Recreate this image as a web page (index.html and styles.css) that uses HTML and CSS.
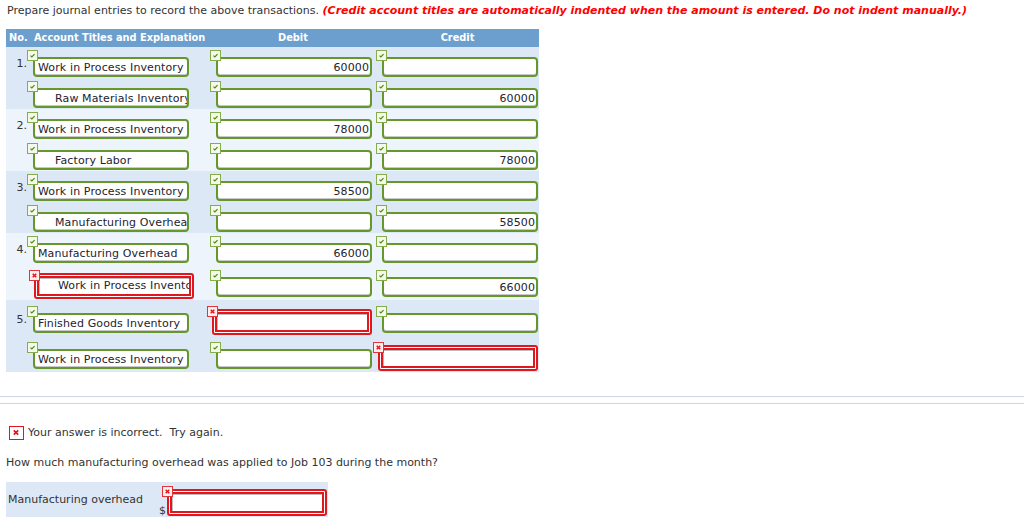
FILE: index.html
```html
<!DOCTYPE html>
<html>
<head>
<meta charset="utf-8">
<title>Journal entries</title>
<link rel="stylesheet" href="styles.css">
</head>
<body>
<p class="instr">Prepare journal entries to record the above transactions. <em class="note">(Credit account titles are automatically indented when the amount is entered. Do not indent manually.)</em></p>

<div class="jt">
  <div class="jt-head"><span class="h-no">No.</span><span>Account Titles and Explanation</span><span class="h-col">Debit</span><span class="h-col">Credit</span></div>

  <div class="entry dark">
    <div class="line">
      <div class="no">1.</div>
      <div class="field"><span class="chk"><svg viewBox="0 0 11 11"><path d="M3 5.6 L4.7 7.2 L8 3.8" /></svg></span><div class="inp">Work in Process Inventory</div></div>
      <div class="field"><span class="chk"><svg viewBox="0 0 11 11"><path d="M3 5.6 L4.7 7.2 L8 3.8" /></svg></span><div class="inp num">60000</div></div>
      <div class="field"><span class="chk"><svg viewBox="0 0 11 11"><path d="M3 5.6 L4.7 7.2 L8 3.8" /></svg></span><div class="inp num"></div></div>
    </div>
    <div class="line">
      <div class="no"></div>
      <div class="field"><span class="chk"><svg viewBox="0 0 11 11"><path d="M3 5.6 L4.7 7.2 L8 3.8" /></svg></span><div class="inp ind">Raw Materials Inventory</div></div>
      <div class="field"><span class="chk"><svg viewBox="0 0 11 11"><path d="M3 5.6 L4.7 7.2 L8 3.8" /></svg></span><div class="inp num"></div></div>
      <div class="field"><span class="chk"><svg viewBox="0 0 11 11"><path d="M3 5.6 L4.7 7.2 L8 3.8" /></svg></span><div class="inp num">60000</div></div>
    </div>
  </div>

  <div class="entry light">
    <div class="line">
      <div class="no">2.</div>
      <div class="field"><span class="chk"><svg viewBox="0 0 11 11"><path d="M3 5.6 L4.7 7.2 L8 3.8" /></svg></span><div class="inp">Work in Process Inventory</div></div>
      <div class="field"><span class="chk"><svg viewBox="0 0 11 11"><path d="M3 5.6 L4.7 7.2 L8 3.8" /></svg></span><div class="inp num">78000</div></div>
      <div class="field"><span class="chk"><svg viewBox="0 0 11 11"><path d="M3 5.6 L4.7 7.2 L8 3.8" /></svg></span><div class="inp num"></div></div>
    </div>
    <div class="line">
      <div class="no"></div>
      <div class="field"><span class="chk"><svg viewBox="0 0 11 11"><path d="M3 5.6 L4.7 7.2 L8 3.8" /></svg></span><div class="inp ind">Factory Labor</div></div>
      <div class="field"><span class="chk"><svg viewBox="0 0 11 11"><path d="M3 5.6 L4.7 7.2 L8 3.8" /></svg></span><div class="inp num"></div></div>
      <div class="field"><span class="chk"><svg viewBox="0 0 11 11"><path d="M3 5.6 L4.7 7.2 L8 3.8" /></svg></span><div class="inp num">78000</div></div>
    </div>
  </div>

  <div class="entry dark">
    <div class="line">
      <div class="no">3.</div>
      <div class="field"><span class="chk"><svg viewBox="0 0 11 11"><path d="M3 5.6 L4.7 7.2 L8 3.8" /></svg></span><div class="inp">Work in Process Inventory</div></div>
      <div class="field"><span class="chk"><svg viewBox="0 0 11 11"><path d="M3 5.6 L4.7 7.2 L8 3.8" /></svg></span><div class="inp num">58500</div></div>
      <div class="field"><span class="chk"><svg viewBox="0 0 11 11"><path d="M3 5.6 L4.7 7.2 L8 3.8" /></svg></span><div class="inp num"></div></div>
    </div>
    <div class="line">
      <div class="no"></div>
      <div class="field"><span class="chk"><svg viewBox="0 0 11 11"><path d="M3 5.6 L4.7 7.2 L8 3.8" /></svg></span><div class="inp ind">Manufacturing Overhead</div></div>
      <div class="field"><span class="chk"><svg viewBox="0 0 11 11"><path d="M3 5.6 L4.7 7.2 L8 3.8" /></svg></span><div class="inp num"></div></div>
      <div class="field"><span class="chk"><svg viewBox="0 0 11 11"><path d="M3 5.6 L4.7 7.2 L8 3.8" /></svg></span><div class="inp num">58500</div></div>
    </div>
  </div>

  <div class="entry light">
    <div class="line">
      <div class="no">4.</div>
      <div class="field"><span class="chk"><svg viewBox="0 0 11 11"><path d="M3 5.6 L4.7 7.2 L8 3.8" /></svg></span><div class="inp">Manufacturing Overhead</div></div>
      <div class="field"><span class="chk"><svg viewBox="0 0 11 11"><path d="M3 5.6 L4.7 7.2 L8 3.8" /></svg></span><div class="inp num">66000</div></div>
      <div class="field"><span class="chk"><svg viewBox="0 0 11 11"><path d="M3 5.6 L4.7 7.2 L8 3.8" /></svg></span><div class="inp num"></div></div>
    </div>
    <div class="line">
      <div class="no"></div>
      <div class="field bad first"><span class="chk x"><svg viewBox="0 0 11 11"><path d="M3.3 3.3 L7.7 7.7 M7.7 3.3 L3.3 7.7" /></svg></span><div class="inp ind">Work in Process Inventory</div></div>
      <div class="field"><span class="chk"><svg viewBox="0 0 11 11"><path d="M3 5.6 L4.7 7.2 L8 3.8" /></svg></span><div class="inp num"></div></div>
      <div class="field"><span class="chk"><svg viewBox="0 0 11 11"><path d="M3 5.6 L4.7 7.2 L8 3.8" /></svg></span><div class="inp num">66000</div></div>
    </div>
  </div>

  <div class="entry dark">
    <div class="line">
      <div class="no">5.</div>
      <div class="field"><span class="chk"><svg viewBox="0 0 11 11"><path d="M3 5.6 L4.7 7.2 L8 3.8" /></svg></span><div class="inp">Finished Goods Inventory</div></div>
      <div class="field bad"><span class="chk x"><svg viewBox="0 0 11 11"><path d="M3.3 3.3 L7.7 7.7 M7.7 3.3 L3.3 7.7" /></svg></span><div class="inp num"></div></div>
      <div class="field"><span class="chk"><svg viewBox="0 0 11 11"><path d="M3 5.6 L4.7 7.2 L8 3.8" /></svg></span><div class="inp num"></div></div>
    </div>
    <div class="line">
      <div class="no"></div>
      <div class="field"><span class="chk"><svg viewBox="0 0 11 11"><path d="M3 5.6 L4.7 7.2 L8 3.8" /></svg></span><div class="inp">Work in Process Inventory</div></div>
      <div class="field"><span class="chk"><svg viewBox="0 0 11 11"><path d="M3 5.6 L4.7 7.2 L8 3.8" /></svg></span><div class="inp num"></div></div>
      <div class="field bad"><span class="chk x"><svg viewBox="0 0 11 11"><path d="M3.3 3.3 L7.7 7.7 M7.7 3.3 L3.3 7.7" /></svg></span><div class="inp num"></div></div>
    </div>
  </div>
</div>

<div class="sep"></div>

<div class="result"><span class="xbig"><svg viewBox="0 0 14 14"><path d="M4.2 4.2 L9.8 9.8 M9.8 4.2 L4.2 9.8" /></svg></span><span>Your answer is incorrect.&nbsp; Try again.</span></div>

<p class="question">How much manufacturing overhead was applied to Job 103 during the month?</p>

<div class="answer">
  <span class="a-label">Manufacturing overhead</span>
  <span class="dollar">$</span>
  <div class="field bad solo"><span class="chk x"><svg viewBox="0 0 11 11"><path d="M3.3 3.3 L7.7 7.7 M7.7 3.3 L3.3 7.7" /></svg></span><div class="inp num"></div></div>
</div>
</body>
</html>
```

FILE: styles.css
```css
* {
  box-sizing: border-box;
}

body {
  margin: 0;
  font-family: "DejaVu Sans", Verdana, sans-serif;
  font-size: 11px;
  color: #333;
  background: #fff;
}

.instr {
  margin: 0;
  padding: 4px 0 0 7px;
  line-height: 14px;
  white-space: nowrap;
}

.note {
  color: #f00;
  font-weight: bold;
  font-style: italic;
}

/* journal table */
.jt {
  margin: 11px 0 0 6px;
  width: 533px;
}

.jt-head {
  display: grid;
  grid-template-columns: 28px 176px 166px 163px;
  height: 18px;
  line-height: 18px;
  background: #6c9fcd;
  color: #fff;
  font-weight: bold;
  font-size: 9.8px;
  white-space: nowrap;
}

.h-no {
  padding-left: 3px;
}

.h-col {
  text-align: center;
}

.entry.dark {
  background: #dde8f6;
}

.entry.light {
  background: #eef4fc;
}

.line {
  display: grid;
  grid-template-columns: 21px 183px 166px 163px;
  align-items: center;
  padding: 3px 0 1px;
}

.no {
  text-align: right;
  line-height: 13px;
  color: #333;
}

.field {
  position: relative;
  justify-self: start;
  padding: 7px 0 0 6px;
}

.chk {
  position: absolute;
  left: 0;
  top: 0;
  width: 11px;
  height: 11px;
  border: 1px solid #86ad4c;
  background: #f4f9ec;
  z-index: 1;
}

.chk svg {
  display: block;
  width: 9px;
  height: 9px;
}

.chk svg path {
  fill: none;
  stroke: #4f8a12;
  stroke-width: 1.5;
}

.chk.x {
  border-color: #e2343a;
  background: #fff0f0;
}

.chk.x svg path {
  stroke: #e0161d;
  stroke-width: 1.8;
}

.inp {
  width: 156px;
  height: 20px;
  border: 2px solid #66972c;
  border-radius: 4px;
  background: #fff;
  box-shadow: inset 0 -1px 0 #c9c9c9;
  padding: 1px 3px 0;
  line-height: 16px;
  letter-spacing: 0.12px;
  white-space: nowrap;
  overflow: hidden;
  color: #23232f;
}

.inp.num {
  text-align: right;
  padding-right: 1px;
}

.inp.ind {
  padding-left: 20px;
}

/* incorrect fields */
.field.bad {
  padding: 3px 0 0 5px;
  margin: 3px 0 0 -3px;
}

.field.bad.first {
  margin-left: 2px;
}

.bad .inp {
  width: 160px;
  height: 26px;
  border: 5px double #e1171e;
  border-radius: 3px;
  box-shadow: inset 1px 1px 0 #bdbdbd;
  padding-top: 0;
  line-height: 16px;
}

.bad .inp.ind {
  padding-left: 19px;
}

/* feedback area */
.sep {
  margin-top: 24px;
  height: 8px;
  border-top: 1px solid #cbd5e4;
  border-bottom: 1px solid #cbd5e4;
}

.result {
  display: flex;
  align-items: center;
  margin: 22px 0 0 9px;
  line-height: 14px;
  color: #333;
}

.xbig {
  width: 15px;
  height: 14px;
  border: 1.5px solid #e1171e;
  background: #fff;
  margin-right: 4px;
}

.xbig svg {
  display: block;
  width: 12px;
  height: 11px;
}

.xbig svg path {
  fill: none;
  stroke: #e0161d;
  stroke-width: 2.2;
}

.question {
  margin: 16px 0 0 6px;
  line-height: 13px;
}

.answer {
  margin: 13px 0 0 6px;
  width: 322px;
  height: 35px;
  background: #dde8f6;
  display: flex;
  align-items: flex-start;
  padding-top: 4px;
}

.a-label {
  flex: 0 0 153px;
  align-self: center;
  padding-left: 2px;
  margin-top: -4px;
  line-height: 13px;
  white-space: nowrap;
}

.dollar {
  flex: 0 0 7px;
  align-self: flex-end;
  line-height: 12px;
}

.field.bad.solo {
  margin: 0 0 0 -4px;
}

.solo .inp {
  height: 27px;
}
```
